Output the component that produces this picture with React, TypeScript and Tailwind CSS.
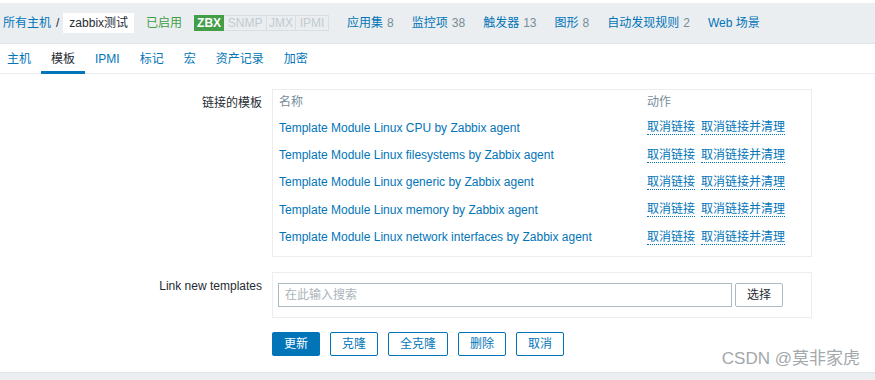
import React from 'react'

const font = { fontFamily: '"Liberation Sans", Arial, "Noto Sans CJK SC", sans-serif' }

const navItems = [
  { label: '应用集', count: '8' },
  { label: '监控项', count: '38' },
  { label: '触发器', count: '13' },
  { label: '图形', count: '8' },
  { label: '自动发现规则', count: '2' },
  { label: 'Web 场景', count: '' },
]

const tabs = ['主机', '模板', 'IPMI', '标记', '宏', '资产记录', '加密']

const templates = [
  'Template Module Linux CPU by Zabbix agent',
  'Template Module Linux filesystems by Zabbix agent',
  'Template Module Linux generic by Zabbix agent',
  'Template Module Linux memory by Zabbix agent',
  'Template Module Linux network interfaces by Zabbix agent',
]

const actions = ['克隆', '全克隆', '删除', '取消']

export default function App() {
  return (
    <div className="relative h-[380px] w-[875px] overflow-hidden bg-white text-[12px] text-[#1f2c33]" style={font}>
      <div className="h-[3px] bg-white" />
      <div className="flex h-[41px] items-center border-b border-[#dfe4e7] bg-[#ebeef0] pl-[3px]">
        <span className="text-[#0275b8]">所有主机</span>
        <span className="ml-[5px] text-[#1f2c33]">/</span>
        <span className="ml-[4px] flex h-[20px] items-center bg-white px-[6px] text-[#1f2c33]">zabbix测试</span>
        <span className="ml-[12px] text-[#429e47]">已启用</span>
        <div className="ml-[12px] flex h-[16px] items-stretch text-[12px] leading-[16px]">
          <span className="w-[30px] bg-[#429e47] text-center font-bold text-white">ZBX</span>
          <span className="w-[43px] border border-l-0 border-[#d9dee1] text-center leading-[14px] text-[#c0cbd1]">SNMP</span>
          <span className="w-[29px] border border-l-0 border-[#d9dee1] text-center leading-[14px] text-[#c0cbd1]">JMX</span>
          <span className="w-[33px] border border-l-0 border-[#d9dee1] text-center leading-[14px] text-[#c0cbd1]">IPMI</span>
        </div>
        {navItems.map((n) => (
          <span key={n.label} className="ml-[18px]">
            <span className="text-[#0275b8]">{n.label}</span>
            {n.count && <span className="ml-[4px] text-[#768d99]">{n.count}</span>}
          </span>
        ))}
      </div>

      <div className="flex h-[30px] items-stretch border-b border-[#ebeef0] pl-[7px]">
        {tabs.map((t, i) => (
          <div
            key={t}
            className={`relative mr-[20px] flex items-center ${i === 1 ? '-ml-[10px] px-[10px] text-[#1f2c33]' : 'text-[#0275b8]'} ${i === 2 ? '-ml-[10px]' : ''}`}
          >
            {t}
            {i === 1 && <span className="absolute bottom-[-1px] left-0 right-0 h-[3px] bg-[#0275b8]" />}
          </div>
        ))}
      </div>

      <div className="mt-[15px] flex">
        <div className="w-[262px] pt-[5px] text-right">链接的模板</div>
        <div className="ml-[10px] h-[168px] w-[540px] border border-[#ebeef0] px-[6px] pt-[4px]">
          <div className="flex h-[16px] items-center text-[#768d99]">
            <span className="w-[368px]">名称</span>
            <span>动作</span>
          </div>
          {templates.map((t) => (
            <div key={t} className="flex h-[27.4px] items-center pt-[8px]">
              <span className="w-[368px] text-[#0275b8]">{t}</span>
              <span className="border-b border-dotted border-[#0275b8] leading-[14px] text-[#0275b8]">取消链接</span>
              <span className="ml-[6px] border-b border-dotted border-[#0275b8] leading-[14px] text-[#0275b8]">取消链接并清理</span>
            </div>
          ))}
        </div>
      </div>

      <div className="mt-[15px] flex">
        <div className="w-[262px] pt-[5px] text-right">Link new templates</div>
        <div className="ml-[10px] flex h-[46px] w-[540px] items-start border border-[#ebeef0] px-[5px] pt-[10px]">
          <div className="flex h-[24px] w-[454px] items-center border border-[#acbbc2] px-[6px] text-[#aab4b9]">在此输入搜索</div>
          <button className="ml-[3px] h-[24px] w-[48px] rounded-[2px] border border-[#acbbc2] bg-white text-[#1f2c33]">选择</button>
        </div>
      </div>

      <div className="ml-[272px] mt-[14px] flex gap-[10px]">
        <button className="h-[24px] w-[48px] rounded-[2px] bg-[#0275b8] text-white">更新</button>
        {actions.map((a) => (
          <button
            key={a}
            className={`h-[24px] rounded-[2px] border border-[#0275b8] bg-white text-[#0275b8] ${a === '全克隆' ? 'w-[60px]' : 'w-[48px]'}`}
          >
            {a}
          </button>
        ))}
      </div>

      <div className="absolute bottom-0 left-0 right-0 h-[8px] border-t border-[#dfe4e7] bg-[#ebeef0]" />
      <div className="absolute bottom-[9px] right-[15px] text-[17px] text-[#a3a8ab]">CSDN @莫非家虎</div>
    </div>
  )
}
